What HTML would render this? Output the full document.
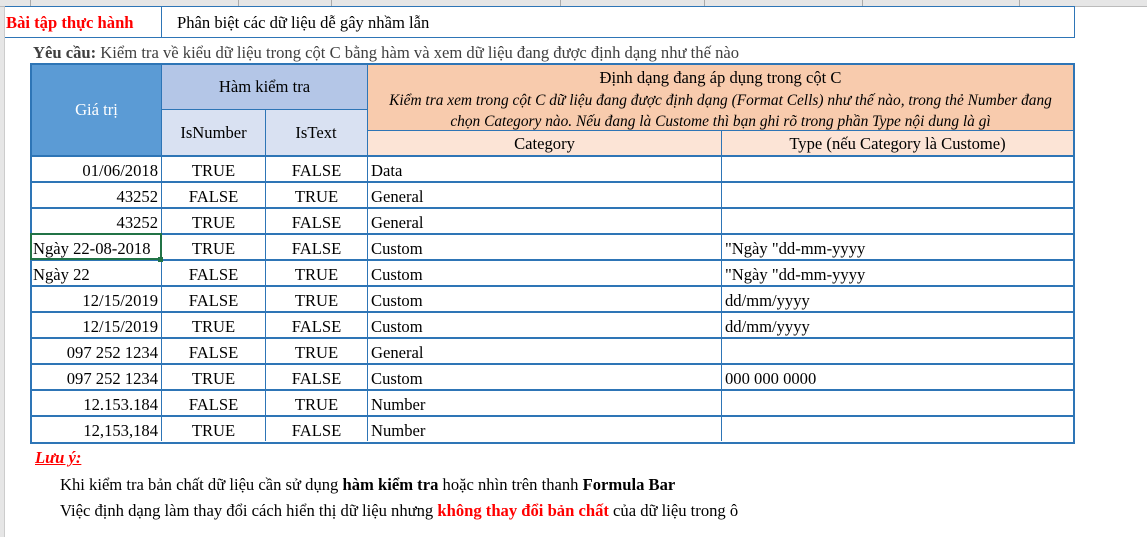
<!DOCTYPE html>
<html><head><meta charset="utf-8"><style>
body{margin:0;width:1147px;height:537px;background:#fff;position:relative;overflow:hidden;font-family:"Liberation Serif",serif;font-size:16.6px;color:#000}
.a{position:absolute;white-space:nowrap}
.tb{position:absolute;left:30px;top:155px;width:1045px}
.row{display:flex;height:24px;line-height:28px;border-top:2px solid #2e75b6}
.row div{box-sizing:border-box;overflow:hidden;white-space:nowrap;padding:0 3px;border-right:1px solid #2e75b6}
.row div:nth-child(1){width:132px;text-align:right}
.row div:nth-child(2){width:104px;text-align:center}
.row div:nth-child(3){width:102px;text-align:center}
.row div:nth-child(4){width:354px}
.row div:nth-child(5){width:353px;border-right:none}
.row div.l{text-align:left}
</style></head><body>
<div class="a" style="left:0;top:0;width:1147px;height:6px;background:#e6e6e6;border-bottom:1px solid #bbb"></div>
<div class="a" style="left:30px;top:0;width:1px;height:6px;background:#aaa"></div>
<div class="a" style="left:238px;top:0;width:1px;height:6px;background:#aaa"></div>
<div class="a" style="left:331px;top:0;width:1px;height:6px;background:#aaa"></div>
<div class="a" style="left:560px;top:0;width:1px;height:6px;background:#aaa"></div>
<div class="a" style="left:704px;top:0;width:1px;height:6px;background:#aaa"></div>
<div class="a" style="left:862px;top:0;width:1px;height:6px;background:#aaa"></div>
<div class="a" style="left:1019px;top:0;width:1px;height:6px;background:#aaa"></div>
<div class="a" style="left:0;top:7px;width:4px;height:530px;background:#e6e6e6;border-right:1px solid #ccc"></div>
<div class="a" style="left:5px;top:6px;width:1070px;height:32px;border:1px solid #2e75b6;border-left:none;box-sizing:border-box"></div>
<div class="a" style="left:161px;top:6px;width:1px;height:32px;background:#2e75b6"></div>
<div class="a" style="left:6px;top:13px;color:#ff0000;font-weight:bold">Bài tập thực hành</div>
<div class="a" style="left:177px;top:13px">Phân biệt các dữ liệu dễ gây nhầm lẫn</div>
<div class="a" style="left:33px;top:43px;color:#404040"><b>Yêu cầu:</b> Kiểm tra về kiểu dữ liệu trong cột C bằng hàm và xem dữ liệu đang được định dạng như thế nào</div>

<div class="a" style="left:30px;top:63px;width:1045px;height:381px;box-sizing:border-box;border:2px solid #2e75b6"></div>
<div class="a" style="left:32px;top:65px;width:129px;height:90px;background:#5b9bd5;color:#fff;text-align:center;line-height:90px">Giá trị</div>
<div class="a" style="left:161px;top:65px;width:1px;height:90px;background:#2e75b6"></div>
<div class="a" style="left:162px;top:65px;width:205px;height:44px;background:#b4c6e7;text-align:center;line-height:44px">Hàm kiểm tra</div>
<div class="a" style="left:162px;top:109px;width:205px;height:1px;background:#2e75b6"></div>
<div class="a" style="left:162px;top:110px;width:205px;height:45px;background:#d9e1f2"></div>
<div class="a" style="left:162px;top:110px;width:103px;text-align:center;line-height:46px">IsNumber</div>
<div class="a" style="left:265px;top:110px;width:102px;text-align:center;line-height:46px">IsText</div>
<div class="a" style="left:265px;top:110px;width:1px;height:45px;background:#2e75b6"></div>
<div class="a" style="left:367px;top:65px;width:1px;height:90px;background:#2e75b6"></div>
<div class="a" style="left:368px;top:65px;width:705px;height:65px;background:#f8cbad;text-align:center">
<div style="line-height:24px;margin-top:1px">Định dạng đang áp dụng trong cột C</div>
<div style="font-style:italic;font-size:15.4px;line-height:21px">Kiểm tra xem trong cột C dữ liệu đang được định dạng (Format Cells) như thế nào, trong thẻ Number đang<br>chọn Category nào. Nếu đang là Custome thì bạn ghi rõ trong phần Type nội dung là gì</div></div>
<div class="a" style="left:368px;top:130px;width:705px;height:1px;background:#2e75b6"></div>
<div class="a" style="left:368px;top:131px;width:705px;height:24px;background:#fce4d6"></div>
<div class="a" style="left:368px;top:131px;width:353px;text-align:center;line-height:26px">Category</div>
<div class="a" style="left:722px;top:131px;width:351px;text-align:center;line-height:26px">Type (nếu Category là Custome)</div>
<div class="a" style="left:721px;top:131px;width:1px;height:24px;background:#2e75b6"></div>

<div class="tb">
<div class="row"><div>01/06/2018</div><div>TRUE</div><div>FALSE</div><div>Data</div><div></div></div>
<div class="row"><div>43252</div><div>FALSE</div><div>TRUE</div><div>General</div><div></div></div>
<div class="row"><div>43252</div><div>TRUE</div><div>FALSE</div><div>General</div><div></div></div>
<div class="row"><div class="l">Ngày 22-08-2018</div><div>TRUE</div><div>FALSE</div><div>Custom</div><div>"Ngày "dd-mm-yyyy</div></div>
<div class="row"><div class="l">Ngày 22</div><div>FALSE</div><div>TRUE</div><div>Custom</div><div>"Ngày "dd-mm-yyyy</div></div>
<div class="row"><div>12/15/2019</div><div>FALSE</div><div>TRUE</div><div>Custom</div><div>dd/mm/yyyy</div></div>
<div class="row"><div>12/15/2019</div><div>TRUE</div><div>FALSE</div><div>Custom</div><div>dd/mm/yyyy</div></div>
<div class="row"><div>097 252 1234</div><div>FALSE</div><div>TRUE</div><div>General</div><div></div></div>
<div class="row"><div>097 252 1234</div><div>TRUE</div><div>FALSE</div><div>Custom</div><div>000 000 0000</div></div>
<div class="row"><div>12.153.184</div><div>FALSE</div><div>TRUE</div><div>Number</div><div></div></div>
<div class="row"><div>12,153,184</div><div>TRUE</div><div>FALSE</div><div>Number</div><div></div></div>
</div>
<div class="a" style="left:30px;top:233px;width:132px;height:27px;box-sizing:border-box;border:2px solid #217346"></div>
<div class="a" style="left:158px;top:257px;width:5px;height:5px;background:#217346"></div>

<div class="a" style="left:35px;top:448px;color:#ff0000;font-weight:bold;font-style:italic;text-decoration:underline">Lưu ý:</div>
<div class="a" style="left:60px;top:475px">Khi kiểm tra bản chất dữ liệu cần sử dụng <b>hàm kiểm tra</b> hoặc nhìn trên thanh <b>Formula Bar</b></div>
<div class="a" style="left:60px;top:501px">Việc định dạng làm thay đổi cách hiển thị dữ liệu nhưng <b style="color:#ff0000">không thay đổi bản chất</b> của dữ liệu trong ô</div>
</body></html>
